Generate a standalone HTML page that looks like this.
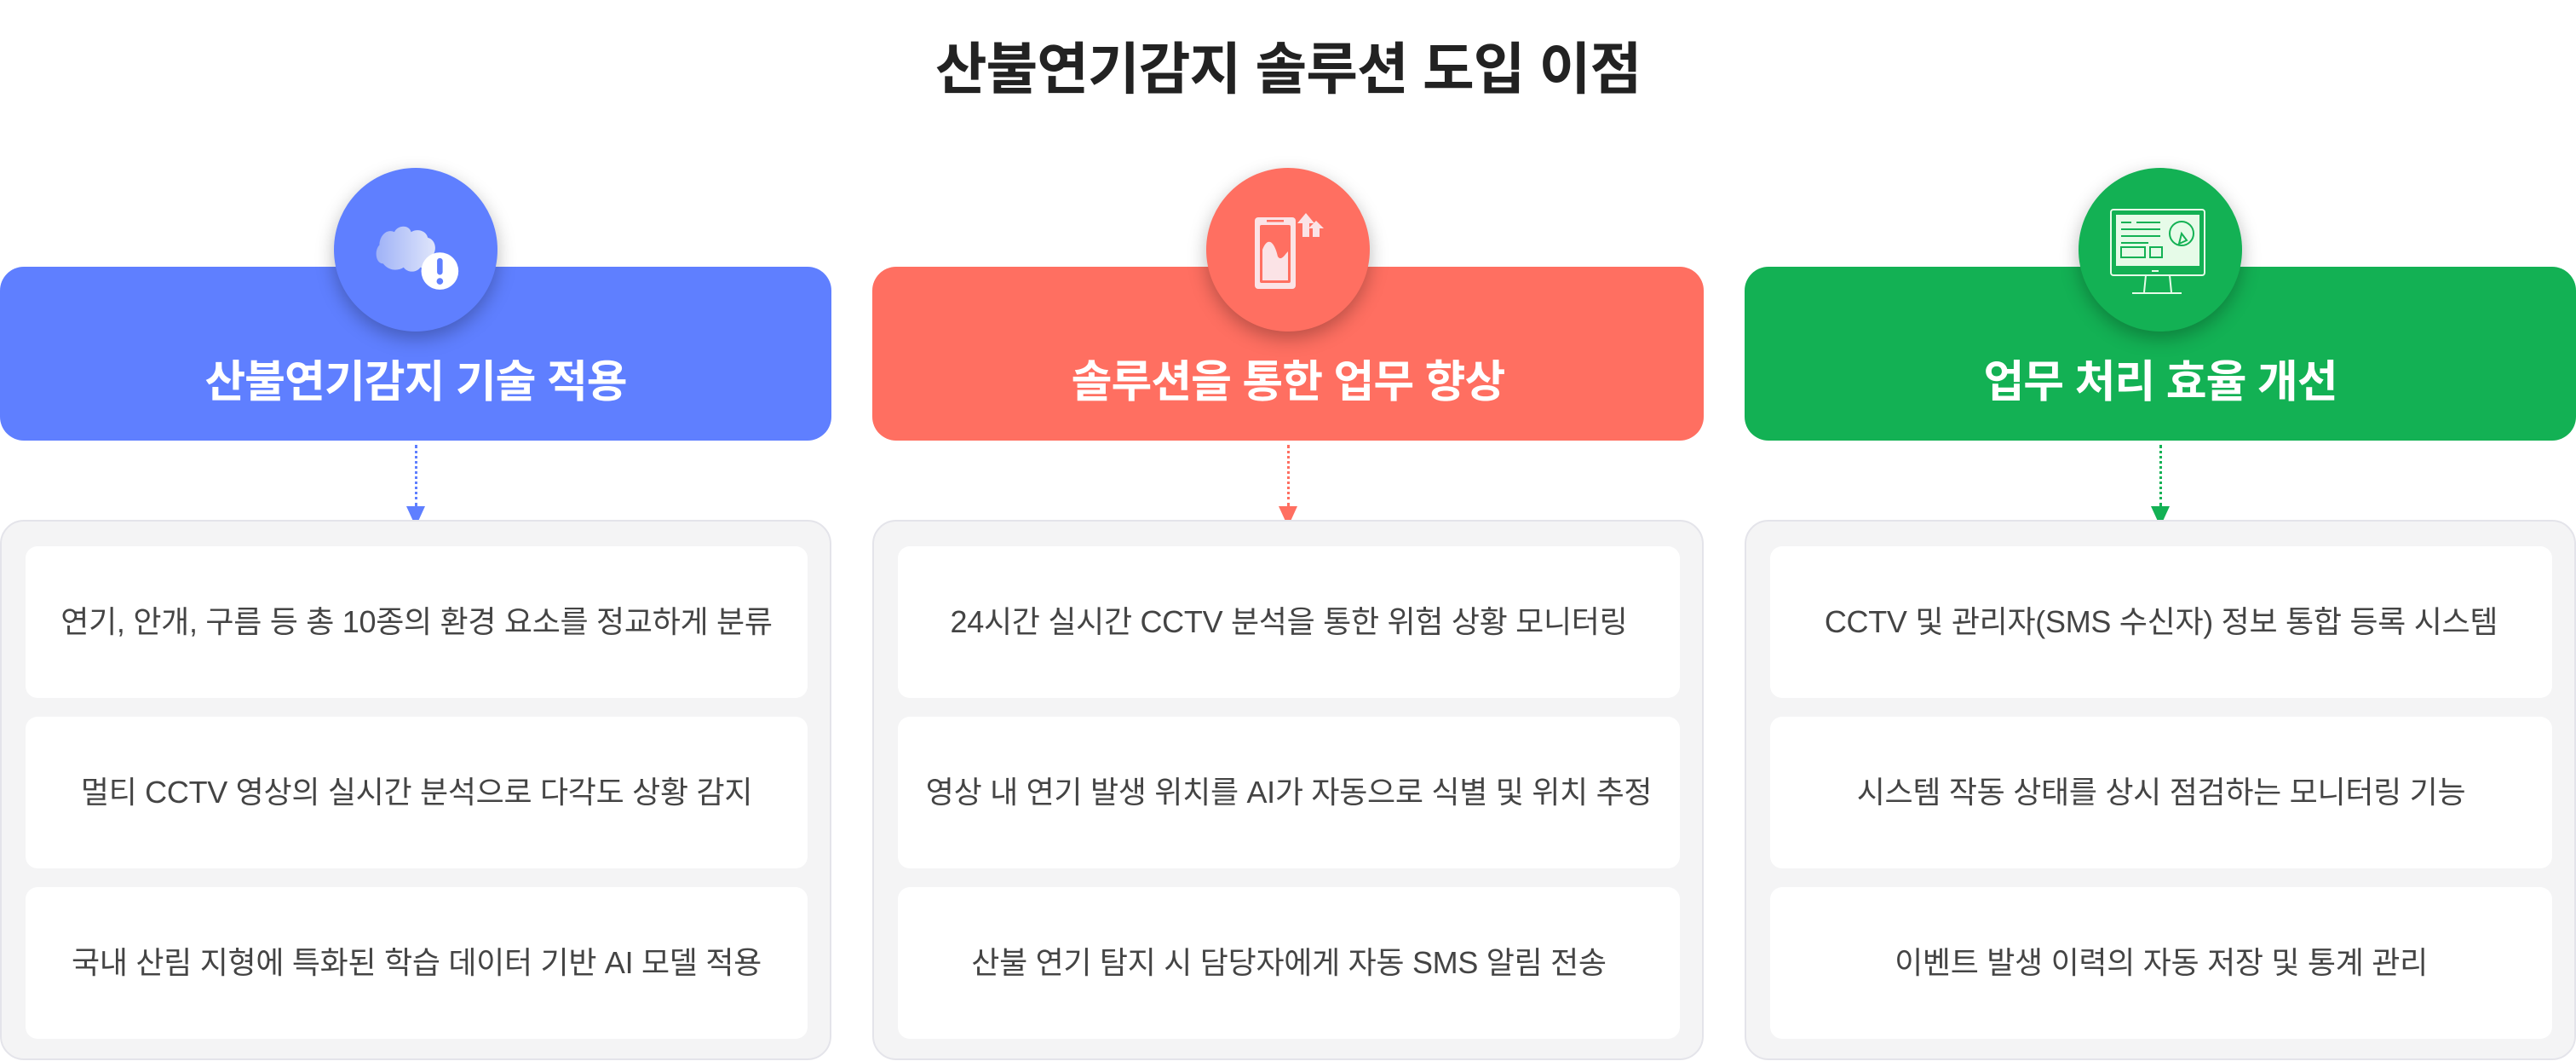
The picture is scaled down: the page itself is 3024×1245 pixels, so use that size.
<!DOCTYPE html>
<html><head><meta charset="utf-8"><style>
*{margin:0;padding:0;box-sizing:border-box}
body{width:3024px;height:1245px;background:#fff;font-family:"Liberation Sans","Noto Sans CJK KR",sans-serif;position:relative;overflow:hidden}
h1{position:absolute;top:28px;left:0;width:100%;text-align:center;font-size:66px;font-weight:700;color:#222;letter-spacing:-1px}
.col{position:absolute;top:0;width:976px;height:1245px}
.head{position:absolute;top:313px;left:0;width:976px;height:204px;border-radius:28px;color:#fff;font-size:52px;font-weight:700;text-align:center;line-height:204px;padding-top:34px;letter-spacing:-1px}
.circ{position:absolute;top:197px;left:392px;width:192px;height:192px;border-radius:50%;box-shadow:0 8px 22px rgba(0,0,0,.28);display:flex;align-items:center;justify-content:center}
.line{position:absolute;left:487px;top:522px;height:72px;border-left:3px dotted}
.tri{position:absolute;left:477px;top:594px;width:0;height:0;border-left:11px solid transparent;border-right:11px solid transparent;border-top:24px solid}
.box{position:absolute;top:610px;left:0;width:976px;height:634px;background:#f4f4f5;border:2px solid #e4e4ea;border-radius:28px}
.card{position:absolute;left:28px;width:918px;height:178px;background:#fff;border-radius:14px;font-size:36px;color:#444;text-align:center;line-height:178px;letter-spacing:-.3px}
</style></head><body>
<h1>산불연기감지 솔루션 도입 이점</h1>

<div class="col" style="left:0">
 <div class="head" style="background:#5f7fff">산불연기감지 기술 적용</div>
 <div class="circ" style="background:#5f7fff">
  <svg width="120" height="120" viewBox="0 0 110 110"><defs><linearGradient id="g1" x1="0" x2="1"><stop offset="0" stop-color="#9fb2f7"/><stop offset="1" stop-color="#dfe5fb"/></linearGradient></defs>
  <path d="M20 70c-8 0-10-14-4-20 0-10 8-18 16-14 4-8 16-8 18 0 6-4 16-2 18 6 8 2 10 12 6 18 2 10-6 16-14 14-4 6-14 6-18 0-6 4-16 4-22-4z" fill="url(#g1)"/>
  <circle cx="81" cy="78" r="20" fill="#fff"/><rect x="78" y="64" width="6" height="18" rx="3" fill="#5f7fff"/><circle cx="81" cy="89" r="3.5" fill="#5f7fff"/></svg>
 </div>
 <div class="line" style="border-color:#5f7fff"></div><div class="tri" style="border-top-color:#5f7fff"></div>
 <div class="box">
  <div class="card" style="top:29px">연기, 안개, 구름 등 총 10종의 환경 요소를 정교하게 분류</div>
  <div class="card" style="top:229px">멀티 CCTV 영상의 실시간 분석으로 다각도 상황 감지</div>
  <div class="card" style="top:429px">국내 산림 지형에 특화된 학습 데이터 기반 AI 모델 적용</div>
 </div>
</div>

<div class="col" style="left:1024px">
 <div class="head" style="background:#ff6f61">솔루션을 통한 업무 향상</div>
 <div class="circ" style="background:#ff6f61">
  <svg width="110" height="110" viewBox="0 0 110 110"><g fill="#fbe3e6">
  <rect x="16" y="17" width="48" height="84" rx="4"/></g>
  <rect x="22" y="26" width="36" height="68" rx="2" fill="#ff6f61"/>
  <path d="M25 91V55c6-16 14-10 18 8 4 6 8-2 12-6v34z" fill="#fbe3e6"/>
  <rect x="30" y="20" width="20" height="2.5" fill="#ff6f61"/>
  <path d="M72 40V24h-6l10-12 10 12h-6v16zM84 40V30h-5l9-9 9 9h-5v10z" fill="#fbe3e6"/></svg>
 </div>
 <div class="line" style="border-color:#ff6f61"></div><div class="tri" style="border-top-color:#ff6f61"></div>
 <div class="box">
  <div class="card" style="top:29px">24시간 실시간 CCTV 분석을 통한 위험 상황 모니터링</div>
  <div class="card" style="top:229px">영상 내 연기 발생 위치를 AI가 자동으로 식별 및 위치 추정</div>
  <div class="card" style="top:429px">산불 연기 탐지 시 담당자에게 자동 SMS 알림 전송</div>
 </div>
</div>

<div class="col" style="left:2048px">
 <div class="head" style="background:#13b154">업무 처리 효율 개선</div>
 <div class="circ" style="background:#13b154">
  <svg width="120" height="110" viewBox="0 0 120 110"><g fill="none" stroke="#e6fbe8" stroke-width="2">
  <rect x="2" y="8" width="110" height="77" rx="3"/><path d="M43 85l-2 20M71 85l2 20M27 106h58"/></g>
  <rect x="8" y="14" width="98" height="60" fill="#e6fbe8"/>
  <g stroke="#13b154" stroke-width="2" fill="none"><path d="M14 23h12M32 23h28M14 31h46M14 39h46M14 47h32"/>
  <rect x="14" y="52" width="28" height="12"/><rect x="48" y="52" width="14" height="12"/>
  <circle cx="85" cy="36" r="14"/><path d="M85 36l-3 12 9-4z"/></g>
  <rect x="50" y="79" width="8" height="2" fill="#e6fbe8"/></svg>
 </div>
 <div class="line" style="border-color:#13b154"></div><div class="tri" style="border-top-color:#13b154"></div>
 <div class="box">
  <div class="card" style="top:29px">CCTV 및 관리자(SMS 수신자) 정보 통합 등록 시스템</div>
  <div class="card" style="top:229px">시스템 작동 상태를 상시 점검하는 모니터링 기능</div>
  <div class="card" style="top:429px">이벤트 발생 이력의 자동 저장 및 통계 관리</div>
 </div>
</div>
</body></html>
